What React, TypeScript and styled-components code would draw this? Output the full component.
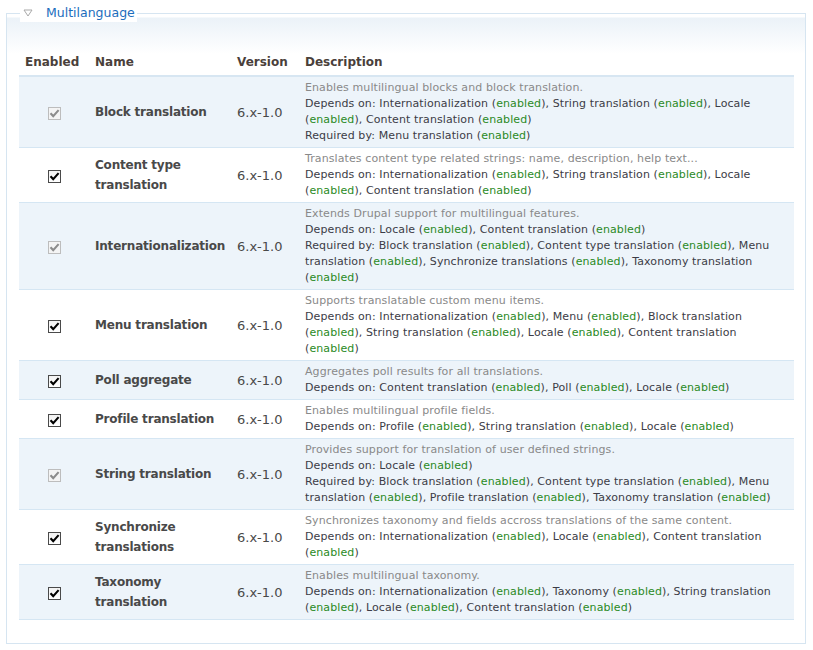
import React from "react";
import styled, { createGlobalStyle } from "styled-components";

type Module = {
  name: string;
  locked?: boolean;
  description: string;
  depends: string[];
  required?: string[];
};

const modules: Module[] = [
  {
    name: "Block translation",
    locked: true,
    description: "Enables multilingual blocks and block translation.",
    depends: ["Internationalization", "String translation", "Locale", "Content translation"],
    required: ["Menu translation"],
  },
  {
    name: "Content type translation",
    description: "Translates content type related strings: name, description, help text...",
    depends: ["Internationalization", "String translation", "Locale", "Content translation"],
  },
  {
    name: "Internationalization",
    locked: true,
    description: "Extends Drupal support for multilingual features.",
    depends: ["Locale", "Content translation"],
    required: [
      "Block translation",
      "Content type translation",
      "Menu translation",
      "Synchronize translations",
      "Taxonomy translation",
    ],
  },
  {
    name: "Menu translation",
    description: "Supports translatable custom menu items.",
    depends: ["Internationalization", "Menu", "Block translation", "String translation", "Locale", "Content translation"],
  },
  {
    name: "Poll aggregate",
    description: "Aggregates poll results for all translations.",
    depends: ["Content translation", "Poll", "Locale"],
  },
  {
    name: "Profile translation",
    description: "Enables multilingual profile fields.",
    depends: ["Profile", "String translation", "Locale"],
  },
  {
    name: "String translation",
    locked: true,
    description: "Provides support for translation of user defined strings.",
    depends: ["Locale"],
    required: [
      "Block translation",
      "Content type translation",
      "Menu translation",
      "Profile translation",
      "Taxonomy translation",
    ],
  },
  {
    name: "Synchronize translations",
    description: "Synchronizes taxonomy and fields accross translations of the same content.",
    depends: ["Internationalization", "Locale", "Content translation"],
  },
  {
    name: "Taxonomy translation",
    description: "Enables multilingual taxonomy.",
    depends: ["Internationalization", "Taxonomy", "String translation", "Locale", "Content translation"],
  },
];

const FONT = `"DejaVu Sans", Verdana, sans-serif`;

const GlobalStyle = createGlobalStyle`
  html, body {
    margin: 0;
    padding: 0;
    background: #fff;
    font-family: ${FONT};
    color: #494949;
  }
`;

// list of modules with an "(enabled)" marker after each
const ModuleList = ({ label, items }: { label: string; items: string[] }) => (
  <Line>
    {label}:{" "}
    {items.map((item, i) => (
      <React.Fragment key={item}>
        {item} (<Status>enabled</Status>)
        {i < items.length - 1 ? ", " : ""}
      </React.Fragment>
    ))}
  </Line>
);

const Check = ({ locked }: { locked?: boolean }) => (
  <CheckBox $locked={locked}>
    <svg width="11" height="11" viewBox="0 0 11 11">
      <path
        d="M1.5 5.3 L4.2 8.1 L9.6 2.1"
        fill="none"
        stroke={locked ? "#8c8c8c" : "#000"}
        strokeWidth="2.1"
      />
    </svg>
  </CheckBox>
);

const App = (): JSX.Element => {
  return (
    <Page>
      <GlobalStyle />
      <Fieldset>
        <Legend>
          <Toggle>
            <svg width="10" height="8" viewBox="0 0 10 8">
              <path d="M1 1 H9 L5 7 Z" fill="none" stroke="#a9a9a9" strokeWidth="1" />
            </svg>
          </Toggle>
          Multilanguage
        </Legend>
        <Table>
          <colgroup>
            <col style={{ width: 70 }} />
            <col style={{ width: 142 }} />
            <col style={{ width: 68 }} />
            <col />
          </colgroup>
          <thead>
            <tr>
              <Th>Enabled</Th>
              <Th>Name</Th>
              <Th>Version</Th>
              <Th>Description</Th>
            </tr>
          </thead>
          <tbody>
            {modules.map((m, i) => (
              <Row key={m.name} $odd={i % 2 === 0}>
                <CheckCell>
                  <Check locked={m.locked} />
                </CheckCell>
                <NameCell>{m.name}</NameCell>
                <VersionCell>6.x-1.0</VersionCell>
                <DescCell>
                  <Summary>{m.description}</Summary>
                  <ModuleList label="Depends on" items={m.depends} />
                  {m.required && <ModuleList label="Required by" items={m.required} />}
                </DescCell>
              </Row>
            ))}
          </tbody>
        </Table>
      </Fieldset>
    </Page>
  );
};

// Styled components
const Page = styled.div`
  padding: 4px 7px 7px 6px;
`;
const Fieldset = styled.fieldset`
  box-sizing: border-box;
  width: 800px;
  margin: 0;
  padding: 26px 11px 23px 12px;
  border: 1px solid #d6e5f1;
  background: linear-gradient(to bottom, #fff 0, #fff 3px, #ebf2f8 4px, #fff 40px);
`;
const Legend = styled.legend`
  display: flex;
  align-items: center;
  margin-left: 1px;
  padding: 0 2px;
  font-size: 12.5px;
  line-height: 18px;
  color: #1b6dbd;
  background: #fff;
`;
const Toggle = styled.span`
  display: inline-flex;
  width: 24px;
  svg {
    margin-left: 1px;
  }
`;
const Table = styled.table`
  width: 100%;
  table-layout: fixed;
  border-collapse: collapse;
`;
const Th = styled.th`
  text-align: left;
  font-size: 12px;
  font-weight: bold;
  padding: 7px 6px 6px;
  color: #4a3f3b;
  border-bottom: 2px solid #d7e6f2;
`;
const Row = styled.tr<{ $odd: boolean }>`
  background: ${(p) => (p.$odd ? "#edf4fa" : "#fff")};
  border-bottom: 1px solid #d5e6f3;
`;
const Cell = styled.td`
  padding: 3px 6px 3px;
  vertical-align: middle;
`;
const CheckCell = styled(Cell)`
  text-align: center;
  padding-left: 0;
  padding-right: 0;
`;
const CheckBox = styled.span<{ $locked?: boolean }>`
  display: inline-flex;
  align-items: center;
  justify-content: center;
  box-sizing: border-box;
  width: 13px;
  height: 13px;
  vertical-align: middle;
  border: 1px solid ${(p) => (p.$locked ? "#bdbdbd" : "#4a4a4a")};
  background: ${(p) =>
    p.$locked ? "#f4f4f4" : "linear-gradient(to bottom, #f2f2f2, #fff)"};
`;
const NameCell = styled(Cell)`
  font-size: 12px;
  font-weight: bold;
  line-height: 20px;
  letter-spacing: -0.2px;
`;
const VersionCell = styled(Cell)`
  font-size: 13px;
`;
const DescCell = styled(Cell)`
  font-size: 11px;
  line-height: 16px;
  letter-spacing: 0.1px;
`;
const Summary = styled.div`
  color: #898989;
`;
const Line = styled.div`
  color: #3c3c46;
`;
const Status = styled.span`
  color: #2a8a1e;
`;

export default App;
